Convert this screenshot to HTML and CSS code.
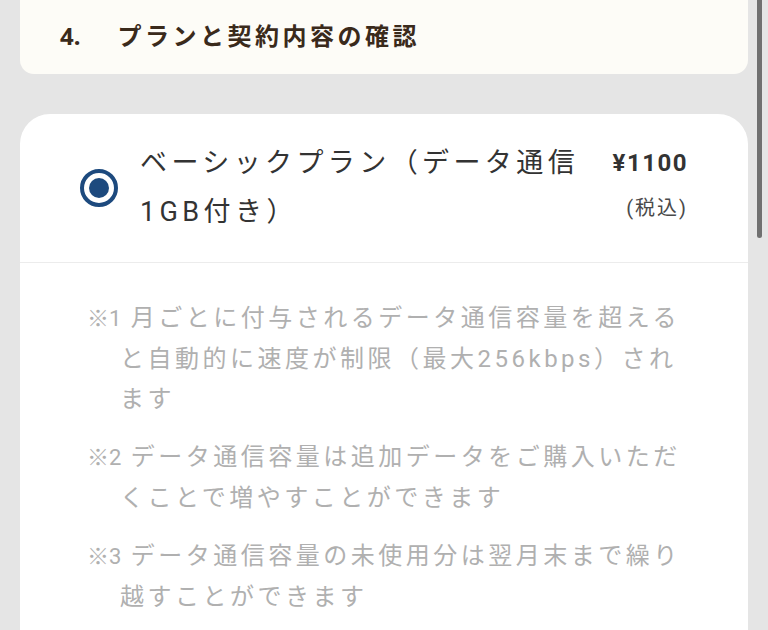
FILE: index.html
```html
<!DOCTYPE html>
<html lang="ja">
<head>
<meta charset="utf-8">
<title>プランと契約内容の確認</title>
<link rel="stylesheet" href="styles.css">
</head>
<body>
<div class="page">
  <section class="step-card">
    <h2 class="step-title"><span class="step-num">4.</span>プランと契約内容の確認</h2>
  </section>

  <section class="plan-card">
    <div class="plan-head">
      <span class="radio" aria-checked="true"><span class="radio-dot"></span></span>
      <div class="plan-name">ベーシックプラン（データ通信1GB付き）</div>
      <div class="plan-price">
        <div class="price">¥1100</div>
        <div class="tax">(税込)</div>
      </div>
    </div>
    <div class="plan-notes">
      <p class="note"><span class="mark">※1</span> 月ごとに付与されるデータ通信容量を超えると自動的に速度が制限（最大256kbps）されます</p>
      <p class="note"><span class="mark">※2</span> データ通信容量は追加データをご購入いただくことで増やすことができます</p>
      <p class="note"><span class="mark">※3</span> データ通信容量の未使用分は翌月末まで繰り越すことができます</p>
    </div>
  </section>
</div>
<div class="scrollbar"></div>
</body>
</html>
```

FILE: styles.css
```css
html, body {
  margin: 0;
  padding: 0;
  background: #e5e5e5;
  height: 630px;
  overflow: hidden;
}

body {
  font-family: Roboto, "Noto Sans CJK JP", sans-serif;
  color: #333333;
}

.page {
  padding: 0 20px;
}

.step-card {
  margin-top: -16px;
  background: #fdfcf7;
  border-radius: 14px;
  padding: 36px 40px 22px;
}

.step-title {
  margin: 0;
  font-family: "Noto Sans", "Noto Sans CJK JP", sans-serif;
  font-size: 24px;
  line-height: 32px;
  font-weight: 700;
  letter-spacing: 3.5px;
  color: #3a2a1b;
}

.step-num {
  letter-spacing: 0;
  margin-right: 37px;
}

.plan-card {
  margin-top: 40px;
  background: #ffffff;
  border-radius: 30px 30px 0 0;
  height: 560px;
}

.plan-head {
  display: flex;
  align-items: center;
  padding: 25px 60px 25px 60px;
  border-bottom: 1px solid #ececec;
}

.radio {
  flex: none;
  width: 38px;
  height: 38px;
  box-sizing: border-box;
  border: 4px solid #1d4a7e;
  border-radius: 50%;
  display: flex;
  align-items: center;
  justify-content: center;
  margin-right: 22px;
}

.radio-dot {
  width: 20px;
  height: 20px;
  border-radius: 50%;
  background: #1d4a7e;
}

.plan-name {
  flex: 1;
  font-size: 27px;
  line-height: 49px;
  letter-spacing: 4.4px;
  color: #333333;
  margin-right: 12px;
}

.plan-price {
  align-self: flex-start;
  text-align: right;
}

.price {
  font-size: 24px;
  line-height: 49px;
  font-weight: 700;
  color: #333333;
  letter-spacing: 1.5px;
}

.tax {
  font-size: 20px;
  line-height: 40px;
  color: #4a4a4a;
  letter-spacing: 2px;
}

.plan-notes {
  padding: 35px 56px 0 67px;
}

.note {
  margin: 0 0 18px;
  padding-left: 33px;
  text-indent: -33px;
  font-size: 24px;
  line-height: 40px;
  letter-spacing: 3.5px;
  color: #b0b0b0;
}

.mark {
  letter-spacing: 0;
  font-size: 22px;
}

.scrollbar {
  position: absolute;
  top: 0;
  right: 6px;
  width: 5px;
  height: 238px;
  background: #707070;
  border-radius: 0 0 3px 3px;
}
```
